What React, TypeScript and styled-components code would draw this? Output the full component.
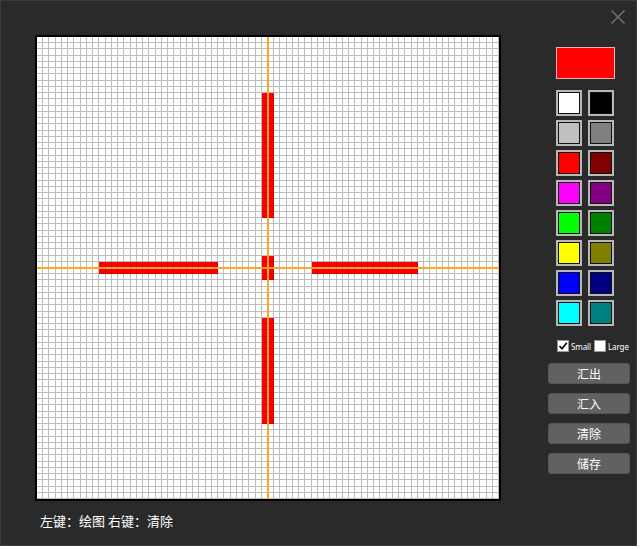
import React from 'react';
import styled, { createGlobalStyle } from 'styled-components';

const COLS = 74;
const CELL = 462 / COLS;

const GlobalStyle = createGlobalStyle`
  html, body {
    margin: 0;
    padding: 0;
    background: #ffffff;
  }
  body {
    font-family: 'Noto Sans', 'Noto Sans CJK SC', sans-serif;
  }
`;

// Styled Components
const Panel = styled.div`
  position: relative;
  width: 637px;
  height: 546px;
  background: #2a2a2a;
  border: 1px solid #3b3b3b;
  display: flex;
  flex-direction: column;
  padding: 34px 0 0 34px;
  box-sizing: border-box;
`;

const CloseButton = styled.div`
  position: absolute;
  top: 7px;
  right: 10px;
  width: 16px;
  height: 16px;
  cursor: pointer;
`;

const Main = styled.div`
  display: flex;
  align-items: flex-start;
`;

const Board = styled.div`
  position: relative;
  width: 462px;
  height: 462px;
  border: 2px solid #000;
  background: #fff;
  display: grid;
  grid-template-columns: repeat(${COLS}, 1fr);
  grid-template-rows: repeat(${COLS}, 1fr);
  flex-shrink: 0;
`;

const Cell = styled.div<{ $on: boolean }>`
  background: ${(p) => (p.$on ? '#ff0000' : '#ffffff')};
  box-shadow: inset -1px -1px 0 ${(p) => (p.$on ? '#d00000' : '#bdbdbd')};
`;

const GuideV = styled.div`
  position: absolute;
  top: 0;
  bottom: 0;
  left: ${CELL * (COLS / 2) - 1}px;
  width: 2px;
  background: #ffa520;
  pointer-events: none;
`;

const GuideH = styled.div`
  position: absolute;
  left: 0;
  right: 0;
  top: ${CELL * (COLS / 2) - 1}px;
  height: 2px;
  background: #ffa520;
  pointer-events: none;
`;

const Sidebar = styled.div`
  width: 82px;
  margin-left: 47px;
  margin-top: 12px;
  display: flex;
  flex-direction: column;
  align-items: flex-start;
`;

const CurrentColor = styled.div<{ $color: string }>`
  margin-left: 8px;
  width: 57px;
  height: 30px;
  background: ${(p) => p.$color};
  border: 1px solid #f0b0b0;
`;

const Palette = styled.div`
  margin-top: 11px;
  margin-left: 8px;
  display: grid;
  grid-template-columns: repeat(2, 26px);
  grid-auto-rows: 26px;
  column-gap: 6px;
  row-gap: 4px;
`;

const Swatch = styled.div<{ $color: string }>`
  box-sizing: border-box;
  border: 2px solid #b8b8b8;
  box-shadow: inset 0 0 0 1px #111;
  background: ${(p) => p.$color};
  cursor: pointer;
`;

const SizeRow = styled.div`
  margin-top: 14px;
  margin-left: 9px;
  display: flex;
  align-items: center;
  gap: 3px;
  font-size: 8px;
  letter-spacing: -0.1px;
  color: #fff;
`;

const SizeOption = styled.label`
  display: flex;
  align-items: center;
  gap: 2px;
`;

const Box = styled.span`
  width: 12px;
  height: 12px;
  background: #fff;
  border: 1px solid #999;
  box-sizing: border-box;
  display: flex;
  align-items: center;
  justify-content: center;
`;

const Buttons = styled.div`
  margin-top: 11px;
  width: 82px;
  display: flex;
  flex-direction: column;
  gap: 9px;
`;

const ActionButton = styled.button`
  height: 21px;
  width: 82px;
  border: 1px solid #555;
  border-radius: 3px;
  background: #616161;
  color: #fff;
  font-family: 'Noto Sans CJK SC', sans-serif;
  font-size: 12px;
  line-height: 19px;
  padding: 0;
  cursor: pointer;
`;

const Hint = styled.div`
  margin-top: 12px;
  margin-left: 5px;
  color: #fff;
  font-family: 'Noto Sans CJK SC', sans-serif;
  font-size: 13px;
  line-height: 16px;
`;

const palette = [
  '#ffffff', '#000000',
  '#c0c0c0', '#808080',
  '#ff0000', '#800000',
  '#ff00ff', '#800080',
  '#00ff00', '#008000',
  '#ffff00', '#808000',
  '#0000ff', '#000080',
  '#00ffff', '#008080',
];

// painted cells of the cross, in grid coordinates
const isPainted = (r: number, c: number) => {
  const vCol = c === 36 || c === 37;
  const hRow = r === 36 || r === 37;
  if (vCol && r >= 9 && r <= 28) return true;
  if (vCol && r >= 35 && r <= 38) return true;
  if (vCol && r >= 45 && r <= 61) return true;
  if (hRow && c >= 10 && c <= 28) return true;
  if (hRow && c >= 44 && c <= 60) return true;
  return false;
};

const cells: boolean[] = [];
for (let r = 0; r < COLS; r++) {
  for (let c = 0; c < COLS; c++) {
    cells.push(isPainted(r, c));
  }
}

const PixelEditor: React.FC = () => {
  return (
    <Panel>
      <GlobalStyle />
      <CloseButton>
        <svg width="16" height="16" viewBox="0 0 16 16">
          <path d="M1.5 1.5 L14.5 14.5 M14.5 1.5 L1.5 14.5" stroke="#6e6e6e" strokeWidth="1.6" />
        </svg>
      </CloseButton>
      <Main>
        <Board>
          {cells.map((on, i) => (
            <Cell key={i} $on={on} />
          ))}
          <GuideV />
          <GuideH />
        </Board>
        <Sidebar>
          <CurrentColor $color="#ff0000" />
          <Palette>
            {palette.map((c) => (
              <Swatch key={c} $color={c} />
            ))}
          </Palette>
          <SizeRow>
            <SizeOption>
              <Box>
                <svg width="10" height="10" viewBox="0 0 10 10">
                  <path d="M1.5 5 L4 7.8 L8.8 1.8" stroke="#000" strokeWidth="1.6" fill="none" />
                </svg>
              </Box>
              Small
            </SizeOption>
            <SizeOption>
              <Box />
              Large
            </SizeOption>
          </SizeRow>
          <Buttons>
            <ActionButton>汇出</ActionButton>
            <ActionButton>汇入</ActionButton>
            <ActionButton>清除</ActionButton>
            <ActionButton>储存</ActionButton>
          </Buttons>
        </Sidebar>
      </Main>
      <Hint>左键：绘图 右键：清除</Hint>
    </Panel>
  );
};

export default PixelEditor;
